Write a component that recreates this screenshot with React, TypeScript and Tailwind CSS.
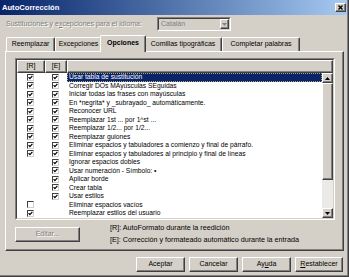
import React from 'react';

type Row = { r: 0 | 1 | 2; e: 0 | 1 | 2; t: string };

// 0 = no box, 1 = empty box, 2 = checked
const rows: Row[] = [
  { r: 2, e: 2, t: 'Usar tabla de sustitución' },
  { r: 2, e: 2, t: 'Corregir DOs MAyúsculas SEguidas' },
  { r: 2, e: 2, t: 'Iniciar todas las frases con mayúsculas' },
  { r: 2, e: 2, t: 'En *negrita* y _subrayado_ automáticamente.' },
  { r: 2, e: 2, t: 'Reconocer URL' },
  { r: 2, e: 2, t: 'Reemplazar 1st ... por 1^st ...' },
  { r: 2, e: 2, t: 'Reemplazar 1/2... por 1/2...' },
  { r: 2, e: 2, t: 'Reemplazar guiones' },
  { r: 2, e: 2, t: 'Eliminar espacios y tabuladores a comienzo y final de párrafo.' },
  { r: 2, e: 2, t: 'Eliminar espacios y tabuladores al principio y final de líneas' },
  { r: 0, e: 2, t: 'Ignorar espacios dobles' },
  { r: 0, e: 2, t: 'Usar numeración - Símbolo: •' },
  { r: 0, e: 2, t: 'Aplicar borde' },
  { r: 0, e: 2, t: 'Crear tabla' },
  { r: 0, e: 2, t: 'Usar estilos' },
  { r: 1, e: 0, t: 'Eliminar espacios vacíos' },
  { r: 2, e: 0, t: 'Reemplazar estilos del usuario' },
];

const raised =
  'bg-[#D4D0C8] border border-t-white border-l-white border-r-[#404040] border-b-[#404040] shadow-[inset_-1px_-1px_0_#808080]';

function Check({ state }: { state: 0 | 1 | 2 }) {
  if (state === 0) return null;
  return (
    <div className="w-[7px] h-[7px] bg-white border border-t-[#404040] border-l-[#404040] border-r-[#D4D0C8] border-b-[#D4D0C8]">
      {state === 2 && (
        <svg width="5" height="5" viewBox="0 0 5 5" className="block">
          <polyline points="0.6,2.2 1.9,3.6 4.4,0.9" fill="none" stroke="#000" strokeWidth="1.2" />
        </svg>
      )}
    </div>
  );
}

function Arrow({ up, gray }: { up?: boolean; gray?: boolean }) {
  return (
    <svg width="5" height="3" viewBox="0 0 5 3" className="block">
      <polygon points={up ? '2.5,0 5,3 0,3' : '0,0 5,0 2.5,3'} fill={gray ? '#808080' : '#000'} />
    </svg>
  );
}

function Button({ label, w, disabled }: { label: React.ReactNode; w: string; disabled?: boolean }) {
  return (
    <div
      className={`${raised} ${w} h-[15px] flex items-center justify-center text-[7px] ${
        disabled ? 'text-[#808080] [text-shadow:1px_1px_0_#fff]' : ''
      }`}
    >
      {label}
    </div>
  );
}

function Tab({ label, w, active }: { label: string; w: string; active?: boolean }) {
  return (
    <div
      className={`${w} flex items-center justify-center rounded-t-[2px] bg-[#D4D0C8] border-t border-l border-t-white border-l-white border-r border-r-[#404040] shadow-[inset_-1px_0_0_#808080] text-[7px] whitespace-nowrap ${
        active ? 'relative z-10 h-[17px] -mb-px -mx-[2px] pb-[2px] font-bold' : 'h-[14px]'
      }`}
    >
      {label}
    </div>
  );
}

export default function App() {
  return (
    <div className="w-[349px] h-[277px] bg-[#D4D0C8] border-r border-b border-[#404040] font-['Liberation_Sans',Arial,sans-serif] text-black overflow-hidden">
      <div className="h-full border-r border-b border-[#808080] flex flex-col">
        {/* title bar */}
        <div className="h-[15px] flex items-center pl-[2px] pr-[1px] bg-linear-to-r from-[#0A246A] to-[#A6CAF0]">
          <span className="text-white font-bold text-[7.6px] leading-none">AutoCorrección</span>
          <div className={`${raised} ml-auto w-[11px] h-[9px] flex items-center justify-center`}>
            <svg width="5" height="5" viewBox="0 0 5 5" className="block">
              <path d="M0.5 0.5 L4.5 4.5 M4.5 0.5 L0.5 4.5" stroke="#000" strokeWidth="1.3" />
            </svg>
          </div>
        </div>

        {/* language row */}
        <div className="mt-[2px] h-[14px] flex items-center">
          <div className="w-[157px] pl-[6px] text-[7px] text-[#808080] [text-shadow:1px_1px_0_#fff] whitespace-nowrap">
            Sustituciones y e<span className="underline">x</span>cepciones para el idioma:
          </div>
          <div className="w-[74px] h-[14px] border border-t-[#808080] border-l-[#808080] border-r-white border-b-white">
            <div className="h-full flex items-center border border-t-[#404040] border-l-[#404040] border-r-[#D4D0C8] border-b-[#D4D0C8] bg-[#D4D0C8]">
              <span className="pl-[2px] text-[7px] text-[#808080]">Catalán</span>
              <div className={`${raised} ml-auto w-[9px] h-[10px] flex items-center justify-center`}>
                <Arrow gray />
              </div>
            </div>
          </div>
        </div>

        {/* tabs */}
        <div className="mt-[4px] h-[16px] flex items-end pl-[6px]">
          <Tab label="Reemplazar" w="w-[49px]" />
          <Tab label="Excepciones" w="w-[47px]" />
          <Tab label="Opciones" w="w-[46px]" active />
          <Tab label="Comillas tipográficas" w="w-[78px]" />
          <Tab label="Completar palabras" w="w-[78px]" />
        </div>

        {/* panel */}
        <div className="ml-[5px] w-[339px] h-[200px] flex flex-col pl-[9px] pt-[6px] border-t border-l border-t-white border-l-white border-r border-b border-r-[#404040] border-b-[#404040] shadow-[inset_-1px_-1px_0_#808080]">
          <div className="w-[320px] h-[162px] border border-t-[#808080] border-l-[#808080] border-r-white border-b-white">
            <div className="h-full flex flex-col bg-white border border-t-[#404040] border-l-[#404040] border-r-[#D4D0C8] border-b-[#D4D0C8]">
              <div className="h-[13px] flex text-[7px]">
                <div className={`${raised} w-[28px] flex items-center justify-center`}>[R]</div>
                <div className={`${raised} w-[22px] flex items-center justify-center`}>[E]</div>
                <div className={`${raised} flex-1`} />
              </div>
              <div className="flex-1 flex min-h-0">
                <div className="flex-1 flex flex-col">
                  {rows.map((row, i) => (
                    <div key={i} className="h-[8.53px] flex items-center">
                      <div className="w-[28px] pl-[10px]">
                        <Check state={row.r} />
                      </div>
                      <div className="w-[22px] pl-[7px]">
                        <Check state={row.e} />
                      </div>
                      <div
                        className={`flex-1 h-full flex items-center pl-[2px] text-[6.7px] whitespace-nowrap ${
                          i === 0 ? 'bg-[#0A246A] text-white outline-1 outline-dotted outline-[#b8a878] -outline-offset-1' : ''
                        }`}
                      >
                        {row.t}
                      </div>
                    </div>
                  ))}
                </div>
                <div className="w-[11px] flex flex-col">
                  <div className={`${raised} h-[10px] flex items-center justify-center`}>
                    <Arrow up />
                  </div>
                  <div className={`${raised} h-[97px]`} />
                  <div className="flex-1 bg-[#ECEAE6]" />
                  <div className={`${raised} h-[10px] flex items-center justify-center`}>
                    <Arrow />
                  </div>
                </div>
              </div>
            </div>
          </div>

          <div className="mt-[7px] flex items-start">
            <Button label="Editar..." w="w-[65px]" disabled />
            <div className="ml-[30px] -mt-[5px] text-[7.2px] leading-[12px] whitespace-nowrap">
              <div>[R]: AutoFormato durante la reedición</div>
              <div>[E]: Corrección y formateado automático durante la entrada</div>
            </div>
          </div>
        </div>

        {/* dialog buttons */}
        <div className="mt-[6px] flex justify-end gap-[4px] pr-[4px]">
          <Button label="Aceptar" w="w-[49px]" />
          <Button label="Cancelar" w="w-[49px]" />
          <Button label={<span>Ay<span className="underline">u</span>da</span>} w="w-[49px]" />
          <Button label={<span><span className="underline">R</span>establecer</span>} w="w-[48px]" />
        </div>
      </div>
    </div>
  );
}
